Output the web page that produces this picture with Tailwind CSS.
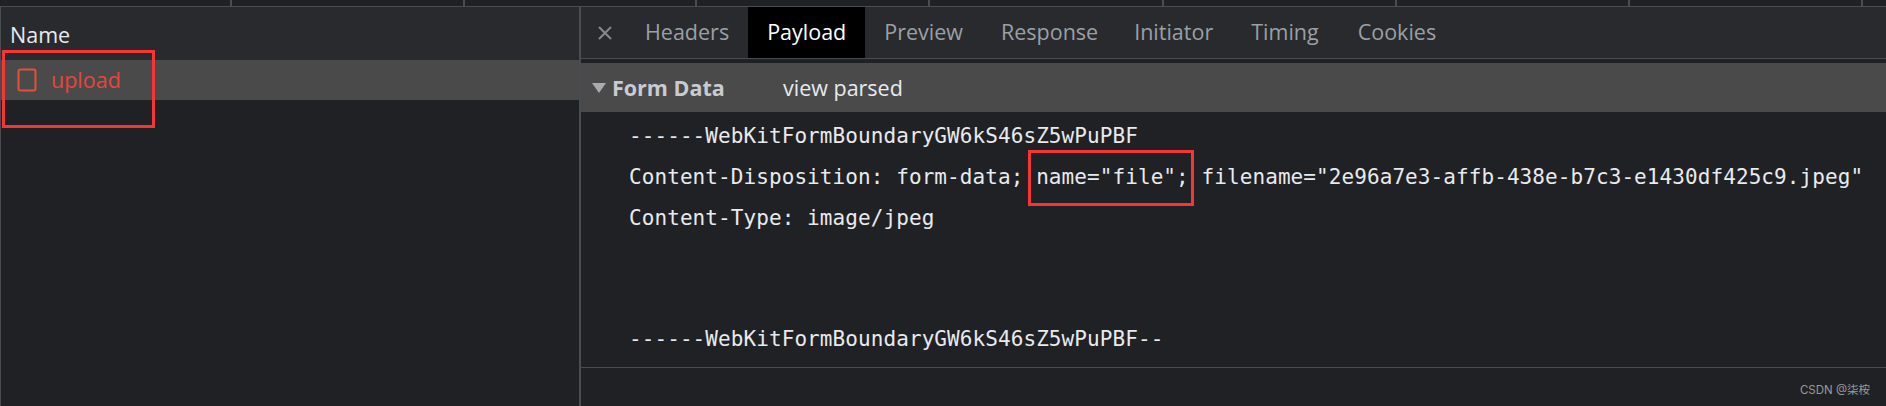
<!DOCTYPE html>
<html lang="en">

<head>
    <meta charset="UTF-8">
    <title>Network panel</title>
    <script src="https://cdn.jsdelivr.net/npm/@tailwindcss/browser@4"></script>
</head>

<body class="bg-[#202124] overflow-hidden font-['Open_Sans',sans-serif]">
    <div class="relative w-[1886px] h-[406px] flex flex-col">
        <!-- timeline ruler -->
        <div class="flex h-[6px] shrink-0 bg-[#202124]">
            <div class="w-[232px] border-r-2 border-[#494c50]"></div>
            <div class="w-[233px] border-r-2 border-[#494c50]"></div>
            <div class="w-[232px] border-r-2 border-[#494c50]"></div>
            <div class="w-[233px] border-r-2 border-[#494c50]"></div>
            <div class="w-[234px] border-r-2 border-[#494c50]"></div>
            <div class="w-[233px] border-r-2 border-[#494c50]"></div>
            <div class="w-[233px] border-r-2 border-[#494c50]"></div>
            <div class="w-[233px] border-r-2 border-[#494c50]"></div>
        </div>
        <div class="h-[1px] shrink-0 bg-[#494c50]"></div>

        <div class="flex flex-1 min-h-0">
            <!-- request list -->
            <div class="w-[579px] shrink-0 border-l border-[#494c50]">
                <div class="h-[53px] bg-[#292a2d] flex items-center pl-[9px] pt-[3px] text-[21.5px] text-[#e8eaed]">Name</div>
                <div class="h-[40px] bg-[#4a4a4a] flex items-center pl-[16px] text-[21.5px] text-[#e8453c]">
                    <svg width="20" height="24" viewBox="0 0 20 24" fill="none" class="shrink-0">
                        <rect x="1.5" y="1.5" width="17" height="21" rx="2" stroke="#e0503f" stroke-width="2" />
                    </svg>
                    <span class="ml-[14px]">upload</span>
                </div>
            </div>
            <div class="w-[2px] shrink-0 bg-[#494c50]"></div>

            <!-- details -->
            <div class="flex-1 flex flex-col min-w-0">
                <div class="h-[51px] shrink-0 bg-[#292a2d] flex items-center text-[21.5px] text-[#9aa0a6]">
                    <svg width="14" height="14" viewBox="0 0 14 14" class="ml-[17px] mr-[14px] shrink-0" stroke="#85888c" stroke-width="2">
                        <path d="M1 1 L13 13 M13 1 L1 13" />
                    </svg>
                    <div class="px-[19px] h-full flex items-center">Headers</div>
                    <div class="px-[19px] h-full flex items-center bg-black text-white">Payload</div>
                    <div class="px-[19px] h-full flex items-center">Preview</div>
                    <div class="px-[19px] h-full flex items-center">Response</div>
                    <div class="pl-[17px] pr-[19px] h-full flex items-center">Initiator</div>
                    <div class="px-[19px] h-full flex items-center">Timing</div>
                    <div class="pl-[20px] pr-[19px] h-full flex items-center">Cookies</div>
                </div>
                <div class="h-[1px] shrink-0 bg-[#494c50]"></div>
                <div class="h-[4px] shrink-0"></div>
                <div class="h-[49px] shrink-0 bg-[#4a4a4a] flex items-center pt-[1px] text-[21.5px]">
                    <svg width="14" height="10" viewBox="0 0 14 10" class="ml-[11px] mr-[6px] shrink-0">
                        <path d="M0 0 H14 L7 10 Z" fill="#a9abae" />
                    </svg>
                    <span class="w-[171px] font-bold text-[#c9cbce]">Form Data</span>
                    <span class="text-[#e8eaed]">view parsed</span>
                </div>
                <div class="h-[255px] shrink-0 pl-[48px] pt-[4px] font-['DejaVu_Sans_Mono',monospace] text-[21px] tracking-[0.08px] text-[#e8eaed] leading-[41px] whitespace-nowrap">
                    <div>------WebKitFormBoundaryGW6kS46sZ5wPuPBF</div>
                    <div>Content-Disposition: form-data; name="file"; filename="2e96a7e3-affb-438e-b7c3-e1430df425c9.jpeg"</div>
                    <div>Content-Type: image/jpeg</div>
                    <div class="mt-[80px]">------WebKitFormBoundaryGW6kS46sZ5wPuPBF--</div>
                </div>
                <div class="h-[1px] shrink-0 bg-[#494c50]"></div>
                <div class="flex-1 flex items-center justify-end pr-[16px] pt-[7px] text-[11.5px] text-[#9a9a9a] font-['Inter','Noto_Sans_CJK_SC',sans-serif]">CSDN @柒桉</div>
            </div>
        </div>

        <!-- red annotation boxes -->
        <div class="absolute left-[2px] top-[50px] w-[153px] h-[78px] border-[3px] border-[#f83434]"></div>
        <div class="absolute left-[1028px] top-[150px] w-[166px] h-[56px] border-[3px] border-[#f83434]"></div>
    </div>
</body>

</html>
